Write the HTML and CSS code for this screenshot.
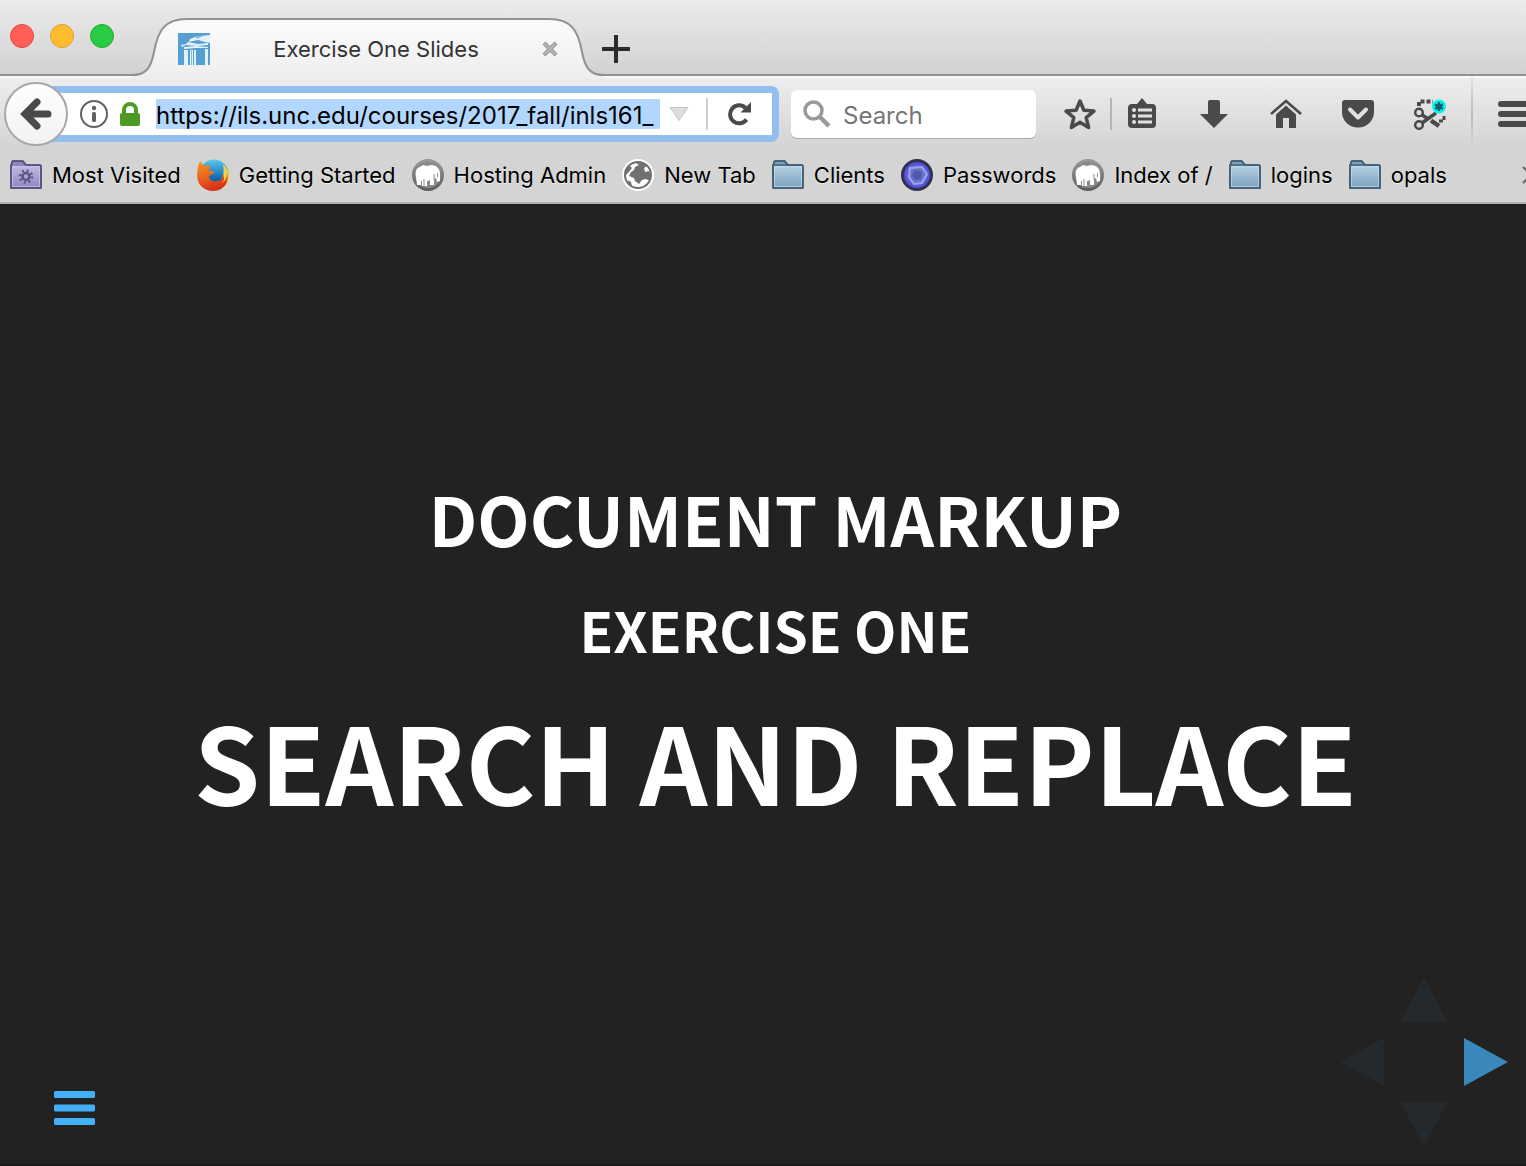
FILE: index.html
```html
<!DOCTYPE html>
<html lang="en">
<head>
<meta charset="utf-8">
<title>Exercise One Slides</title>
<link rel="stylesheet" href="styles.css">
</head>
<body>
<svg class="defs" aria-hidden="true">
  <defs>
    <linearGradient id="folderFill" x1="0" y1="0" x2="0" y2="1"><stop offset="0" stop-color="#b4cfe0"/><stop offset="1" stop-color="#7da3c0"/></linearGradient>
    <linearGradient id="smartFill" x1="0" y1="0" x2="0" y2="1"><stop offset="0" stop-color="#bfb8e2"/><stop offset="1" stop-color="#9388c4"/></linearGradient>
    <linearGradient id="tabFill" x1="0" y1="0" x2="0" y2="1"><stop offset="0" stop-color="#fbfbfb"/><stop offset="1" stop-color="#eeeeee"/></linearGradient>
    <linearGradient id="foxFill" x1="0" y1="0" x2="0.3" y2="1"><stop offset="0" stop-color="#f59a22"/><stop offset="0.5" stop-color="#ee6a1c"/><stop offset="1" stop-color="#d5321c"/></linearGradient>
    <linearGradient id="skyFill" x1="0" y1="0" x2="0" y2="1"><stop offset="0" stop-color="#5cc8ee"/><stop offset="0.6" stop-color="#1272b8"/><stop offset="1" stop-color="#143c78"/></linearGradient>
    <radialGradient id="gemFill"><stop offset="0" stop-color="#5c66c0"/><stop offset="0.5" stop-color="#6d70d8"/><stop offset="1" stop-color="#4440dc"/></radialGradient>
    <linearGradient id="ringFill" x1="0" y1="0" x2="0" y2="1"><stop offset="0" stop-color="#989898"/><stop offset="1" stop-color="#5e5e5e"/></linearGradient>
    <symbol id="folder" viewBox="0 0 32 32">
      <path d="M1 29V6l1-1V3l1-1h9.500l3.500 4h14l1 1v22z" fill="#7fa2bb" stroke="#46637b" stroke-width="2" stroke-linejoin="round"/>
      <path d="M2 7h28v21H2z" fill="url(#folderFill)"/>
      <path d="M2.500 27.500V8h27v19.500z" fill="none" stroke="#c3dbe9" stroke-opacity=".7"/>
      <path d="M1 6h14" stroke="#46637b" stroke-width="1.500"/>
    </symbol>
    <symbol id="elephant" viewBox="0 0 32 32">
      <circle cx="16" cy="16" r="14.500" fill="#8a8a8a" stroke="url(#ringFill)" stroke-width="3"/>
      <path d="M4 18c-1-5 0-9 4-10l3-2 4 1 4-1c6 0 9 4 9 9v7l-3 1-1-4-2 1v6h-5v-4h-2v5h-5v-5h-1v4H5z" fill="#fff"/>
      <path d="M12 20v7M17.500 21v5M22 15v6M25.500 14v4" stroke="#8a8a8a" fill="none"/>
    </symbol>
  </defs>
</svg>
<div class="window">
  <header class="chrome">
    <div class="tabstrip">
      <div class="lights">
        <button class="light close" aria-label="Close window"></button>
        <button class="light minimize" aria-label="Minimize window"></button>
        <button class="light expand" aria-label="Zoom window"></button>
      </div>
      <div class="tab">
        <svg class="tab-edge" viewBox="0 0 60 60"><path d="M0 58c14 0 19-7 22-23C26 14 32 2 55 2h5v58H0z" fill="url(#tabFill)"/><path d="M0 57c14 0 19-7 22-23C26 13 32 1 55 1h5" fill="none" stroke="#929292" stroke-width="2"/></svg>
        <div class="tab-body">
          <svg class="favicon" viewBox="0 0 32 32"><path fill="#569fd3" d="M0 0h32v32H0z"/><path d="M12 6 17 4l6-1 9-1v8l-5-1-7-2-9 2zM3 12l5-1 2-2 10 2 10-1v2l-11 1-11-1-4 2zM6 14l12-1 12 1v1l-12 0-12 1zM6 17h4v15H6zM12 17h3v15h-3zM16 17h2v15h-2zM27 16h3v16h-3z" fill="#e3f1f8"/><path d="M18 4l9-2-8 4M13 15h1v17h-1z" fill="#86bce0"/></svg>
          <span class="tab-title">Exercise One Slides</span>
          <button class="plain tab-close" aria-label="Close tab"><svg viewBox="0 0 16 16"><path d="M2 2l12 12M14 2L2 14" stroke="#8a8a8a" stroke-width="4"/><path d="M2.500 2.500l11 11M13.500 2.500l-11 11" stroke="#b4b4b4" stroke-width="2.500"/></svg></button>
        </div>
        <svg class="tab-edge" viewBox="0 0 60 60"><path d="M60 58C46 58 41 51 38 35C34 14 28 2 5 2H0v58h60z" fill="url(#tabFill)"/><path d="M60 57C46 57 41 50 38 34C34 13 28 1 5 1H0" fill="none" stroke="#929292" stroke-width="2"/></svg>
      </div>
      <button class="plain new-tab" aria-label="New tab"><svg viewBox="0 0 28 28"><path d="M14 0v28M0 14h28" stroke="#2b2b2b" stroke-width="4"/></svg></button>
    </div>

    <div class="toolbar">
      <button class="back" aria-label="Back"><svg viewBox="0 0 32 32"><path d="M17 4 5 16l12 12M6 16h22" fill="none" stroke="#4a4a4a" stroke-width="7" stroke-linecap="round" stroke-linejoin="miter"/></svg></button>
      <div class="urlbar">
        <svg class="info" viewBox="0 0 28 28"><circle cx="14" cy="14" r="13" fill="none" stroke="#626262" stroke-width="2"/><circle cx="14" cy="8" r="2.200" fill="#626262"/><rect x="12" y="12" width="4" height="10" rx="1.500" fill="#626262"/></svg>
        <svg class="lock" viewBox="0 0 20 24"><path d="M4 12V8a6 6 0 0 1 12 0v4" fill="none" stroke="#4d9a26" stroke-width="4"/><rect y="11" width="20" height="13" rx="2" fill="#4d9a26"/></svg>
        <input class="url" aria-label="Address" value="https://ils.unc.edu/courses/2017_fall/inls161_">
        <button class="plain drop" aria-label="Show history"><svg viewBox="0 0 20 14"><path d="M1 .500h18L10 13.500z" fill="#dedede" stroke="#c6c6c6"/></svg></button>
        <span class="divider"></span>
        <button class="plain reload" aria-label="Reload"><svg viewBox="0 0 24 24"><path d="M18.500 17.500a9 9 0 1 1-1-11.500" fill="none" stroke="#4a4a4a" stroke-width="4"/><path d="M23 0v10.500H12.500z" fill="#4a4a4a"/></svg></button>
      </div>
      <div class="searchbar">
        <svg viewBox="0 0 28 28"><circle cx="10.500" cy="10.500" r="8.500" fill="none" stroke="#999" stroke-width="3.500"/><path d="M16 16l10 10" stroke="#999" stroke-width="4.500"/></svg>
        <input class="search" type="search" aria-label="Search" placeholder="Search">
      </div>
      <button class="plain tool star" aria-label="Bookmark this page"><svg viewBox="0 0 32 32"><path d="M16 3l3.900 9.300 10 .8-7.700 6.500 2.400 9.900L16 24.200l-8.600 5.300 2.400-9.900-7.700-6.500 10-.8z" fill="none" stroke="#4a4a4a" stroke-width="3.500" stroke-linejoin="round"/></svg></button>
      <span class="divider dark"></span>
      <div class="tools">
        <button class="plain tool" aria-label="Show bookmarks"><svg viewBox="0 0 32 32"><path d="M11 6l5-6 5 6h5a4 4 0 0 1 4 4v16a4 4 0 0 1-4 4H6a4 4 0 0 1-4-4V10a4 4 0 0 1 4-4z" fill="#4a4a4a"/><path d="M12 12h14M12 18h14M12 24h14" stroke="#e2e2e2" stroke-width="3"/><g fill="#e2e2e2"><circle cx="8" cy="12" r="2"/><circle cx="8" cy="18" r="2"/><circle cx="8" cy="24" r="2"/></g></svg></button>
        <button class="plain tool" aria-label="Downloads"><svg viewBox="0 0 32 32"><path d="M12 2h8q2 0 2 2v12h8L16 30 2 16h8V4q0-2 2-2z" fill="#4a4a4a"/></svg></button>
        <button class="plain tool" aria-label="Home"><svg viewBox="0 0 32 32"><path d="M1 16 16 3l15 13" fill="none" stroke="#4a4a4a" stroke-width="2.500"/><path d="M16 7.500 26 16.500V30h-7V20h-6v10H6V16.500z" fill="#4a4a4a"/></svg></button>
        <button class="plain tool" aria-label="Save to Pocket"><svg viewBox="0 0 32 32"><path d="M3 2h26q3 0 3 3v9a16 15.500 0 0 1-32 0V5q0-3 3-3z" fill="#4a4a4a"/><path d="M8 11.500l8 8 8-8" fill="none" stroke="#e2e2e2" stroke-width="4" stroke-linecap="round" stroke-linejoin="round"/></svg></button>
        <button class="plain tool" aria-label="Capture page"><svg viewBox="0 0 32 32"><g fill="none" stroke="#4a4a4a"><circle cx="5" cy="14.500" r="3.800" stroke-width="2.500"/><circle cx="5" cy="27" r="3.800" stroke-width="2.500"/><path d="M8 25 22 15M8 17l5 3" stroke-width="3.500"/><path d="M17 22.500l8 5.500" stroke-width="4.500"/><path d="M5 8V3.500h14" stroke-width="4" stroke-dasharray="4 2"/><path d="M30 18v5h-5" stroke-width="3" stroke-dasharray="4 2"/></g><circle cx="25" cy="8.500" r="7" fill="#00f6f6"/><path d="M25 4v9M21 6.300l8 4.500M21 10.800l8-4.500" stroke="#175c68" stroke-width="2.500"/></svg></button>
      </div>
      <span class="menu-divider"></span>
      <button class="plain menu" aria-label="Open menu"><svg viewBox="0 0 36 28"><path d="M3 4h30M3 14h30M3 24h30" stroke="#4a4a4a" stroke-width="6" stroke-linecap="round"/></svg></button>
    </div>

    <nav class="bookmarks" aria-label="Bookmarks">
      <a href="#"><svg viewBox="0 0 32 32"><path d="M1 29V6l1-1V3l1-1h9.500l3.500 4h14l1 1v22z" fill="#9187bd" stroke="#5d5584" stroke-width="2" stroke-linejoin="round"/><path d="M2 7h28v21H2z" fill="url(#smartFill)"/><path d="M2.500 27.500V8h27v19.500z" fill="none" stroke="#cdc8ea" stroke-opacity=".7"/><circle cx="16" cy="17.500" r="3.500" fill="none" stroke="#5d5584" stroke-width="2.500"/><circle cx="16" cy="17.500" r="6" fill="none" stroke="#5d5584" stroke-width="2.500" stroke-dasharray="2 2.700"/></svg>Most Visited</a>
      <a href="#"><svg viewBox="0 0 32 32"><circle cx="17" cy="15" r="14.500" fill="url(#skyFill)"/><path d="M26 5c8 7 8 19 0 24l-8-3c7-3 10-10 8-21z" fill="#f6d045"/><path d="M3 2l4 5c2-1 5-1 7 0l-3 4 3 1c3 0 4 1 3 2l-5 3c0 4 4 6 8 5 4 0 6-3 6-7 2 4 1 7-1 9 4-2 5-6 5-10 3 10-4 18-14 18C6 32-2 24 .5 12c0-3 1-7 2.500-10z" fill="url(#foxFill)"/></svg>Getting Started</a>
      <a href="#"><svg><use href="#elephant"/></svg>Hosting Admin</a>
      <a href="#"><svg viewBox="0 0 32 32"><circle cx="16" cy="16" r="16" fill="#fff"/><circle cx="16" cy="16" r="13" fill="#fff" stroke="#707070" stroke-width="2"/><path d="M14 4l8 0 3 3-3 2 1 4 4-1 2 4-1 6-4-2-4 1-3 4-4-3-1-3-5-2 2-4 3-2 1-3 4-2z" fill="#707070"/><path d="M4 10l4-3 2 2-4 5-2 2zM6 21l3 2 1 4c-3-1-4-4-4-6z" fill="#707070"/></svg>New Tab</a>
      <a href="#"><svg><use href="#folder"/></svg>Clients</a>
      <a href="#"><svg viewBox="0 0 32 32"><circle cx="16" cy="16" r="14.500" fill="url(#gemFill)" stroke="#30304c" stroke-width="3"/><path d="M9 9l12-1 5 7-5 9-8 1-5-7z" fill="#6a71c6" stroke="#9fa3ef" stroke-width="2"/><path d="M14 11l7 2-1 7-6 1-3-5z" fill="#5059b0"/></svg>Passwords</a>
      <a href="#"><svg><use href="#elephant"/></svg>Index of /</a>
      <a href="#"><svg><use href="#folder"/></svg>logins</a>
      <a href="#"><svg><use href="#folder"/></svg>opals</a>
      <button class="plain more" aria-label="More bookmarks"><svg viewBox="0 0 12 18"><path d="M1 1l8 8-8 8" fill="none" stroke="#666" stroke-width="2"/></svg></button>
    </nav>
  </header>

  <main class="deck">
    <section class="slide">
      <h2>DOCUMENT MARKUP</h2>
      <h3>EXERCISE ONE</h3>
      <h1>SEARCH AND REPLACE</h1>
    </section>
    <button class="plain deck-menu" aria-label="Slide menu"><svg viewBox="0 0 42 36"><g fill="#42affa"><rect y="1" width="41" height="7" rx="1.500"/><rect y="14.500" width="41" height="7" rx="1.500"/><rect y="28" width="41" height="7" rx="1.500"/></g></svg></button>
    <div class="controls">
      <button class="plain up" aria-label="Slide up"><svg viewBox="0 0 48 44"><path d="M24 0l24 44H0z"/></svg></button>
      <button class="plain left" aria-label="Previous slide"><svg viewBox="0 0 44 48"><path d="M44 0v48L0 24z"/></svg></button>
      <button class="plain right" aria-label="Next slide"><svg viewBox="0 0 44 48"><path d="M0 0v48l44-24z"/></svg></button>
      <button class="plain down" aria-label="Slide down"><svg viewBox="0 0 48 44"><path d="M0 0h48L24 44z"/></svg></button>
    </div>
  </main>
</div>
</body>
</html>
```
FILE: styles.css
```css
* { box-sizing: border-box; }

body {
  margin: 0;
  font-family: Inter, "Liberation Sans", sans-serif;
  font-size: 22px;
  color: #000;
}

svg { display: block; flex-shrink: 0; }
.defs { position: absolute; width: 0; height: 0; }

.plain {
  padding: 0;
  border: 0;
  background: none;
  display: flex;
  align-items: center;
  justify-content: center;
  flex-shrink: 0;
}

.window {
  min-height: 100vh;
  display: flex;
  flex-direction: column;
  overflow: hidden;
}

.chrome {
  background: linear-gradient(#eeeeee 76px, #d4d4d4 148px);
  border-bottom: 2px solid #b0b0b0;
}

/* tab strip */
.tabstrip {
  height: 76px;
  display: flex;
  align-items: flex-end;
  background: linear-gradient(#ebebeb, #d2d2d2);
  border-bottom: 2px solid #929292;
}
.lights { display: flex; gap: 16px; padding-left: 10px; align-self: flex-start; margin-top: 24px; width: 132px; flex-shrink: 0; }
.light { width: 24px; height: 24px; padding: 0; border-radius: 50%; border: 1px solid; }
.close { background: #ff5f57; border-color: #e2453e; }
.minimize { background: #febc2e; border-color: #e0a028; }
.expand { background: #28cb41; border-color: #1cad2f; }

.tab { display: flex; height: 60px; margin-bottom: -4px; margin-right: -2px; }
.tab-edge { width: 60px; height: 60px; }
.tab-body {
  position: relative;
  width: 364px;
  display: flex;
  align-items: center;
  margin: 0 -6px;
  background: linear-gradient(#fbfbfb, #eeeeee);
  border-top: 2px solid #929292;
}
.favicon { width: 32px; height: 32px; margin-left: -8px; }
.tab-title { flex: 1; text-align: center; color: #333; }
.tab-close { margin-right: -8px; }
.tab-close svg { width: 16px; height: 16px; }
.new-tab { width: 28px; height: 28px; margin-bottom: 11px; }
.new-tab svg { width: 28px; height: 28px; }

/* navigation toolbar */
.toolbar { height: 74px; display: flex; align-items: center; border-top: 2px solid #f8f8f8; }
.back {
  width: 64px;
  height: 64px;
  margin: 0 -18px 0 4px;
  padding: 0;
  border: 2px solid #a8a8a8;
  border-radius: 50%;
  background: linear-gradient(#fefefe, #f2f2f2);
  display: flex;
  align-items: center;
  justify-content: center;
  flex-shrink: 0;
  z-index: 1;
}
.back svg { width: 32px; height: 32px; }
.urlbar {
  flex: 1;
  min-width: 0;
  height: 56px;
  display: flex;
  align-items: center;
  padding-left: 30px;
  padding-right: 20px;
  border: solid #92bef0;
  border-width: 7px 7px 7px 0;
  border-radius: 0 8px 8px 0;
  background: #fff;
}
.info { width: 28px; height: 28px; }
.lock { width: 20px; height: 24px; margin: 0 16px 0 12px; }
.url, .search { min-width: 0; border: 0; padding: 2px 0 0; font: inherit; font-size: 24px; outline: 0; }
.url { flex: 1; height: 30px; background: #b2d7fe; }
.drop { width: 38px; }
.drop svg { width: 20px; height: 14px; }
.divider { width: 2px; height: 32px; margin: 0 20px 0 8px; background: #cfcfcf; flex-shrink: 0; }
.reload svg { width: 24px; height: 24px; }
.searchbar {
  width: 245px;
  height: 48px;
  flex-shrink: 0;
  display: flex;
  align-items: center;
  gap: 12px;
  margin: 0 28px 0 12px;
  padding-left: 12px;
  border-radius: 6px;
  background: #fff;
  box-shadow: 0 1px 0 #ababab;
}
.searchbar svg { width: 28px; height: 28px; }
.search { flex: 1; background: transparent; }
.search::placeholder { color: #757575; opacity: 1; }
.tool svg { width: 32px; height: 32px; }
.divider.dark { margin: 0 14px; background: #b5b5b5; }
.tools { display: flex; gap: 40px; }
.menu-divider { width: 2px; height: 72px; margin: 0 25px; background: linear-gradient(#dedede, #bbbbbb, #d2d2d2); }
.menu { width: 28px; justify-content: flex-start; }
.menu svg { width: 36px; height: 28px; }

/* bookmarks toolbar */
.bookmarks { height: 52px; display: flex; align-items: center; gap: 16px; padding: 0 0 2px 10px; }
.bookmarks a {
  display: flex;
  align-items: center;
  gap: 10px;
  color: #000;
  text-decoration: none;
  white-space: nowrap;
  text-shadow: 0 1px 0 #eee;
}
.bookmarks svg { width: 32px; height: 32px; }
.more { width: 4px; margin-left: auto; justify-content: flex-start; }
.bookmarks .more svg { width: 12px; height: 18px; }

/* slide deck */
.deck {
  flex: 1;
  position: relative;
  display: flex;
  align-items: center;
  justify-content: center;
  padding: 0 0 66px 25px;
  background: #222;
  border-bottom: 2px solid #1c1a1d;
}
.slide { text-align: center; color: #fff; font-family: "Noto Sans CJK SC", sans-serif; white-space: nowrap; }
.slide h1, .slide h2, .slide h3 { margin: 0; font-weight: 600; }
.slide h2 { font-size: 68px; line-height: 84px; margin-bottom: 36px; }
.slide h3 { font-size: 55px; line-height: 66px; margin-bottom: 32px; }
.slide h1 { font-size: 106px; line-height: 132px; }

.deck-menu { position: absolute; left: 54px; bottom: 38px; }
.deck-menu svg { width: 42px; height: 36px; }
.controls {
  position: absolute;
  right: 18px;
  bottom: 18px;
  display: grid;
  grid-template: 44px 80px 44px / 44px 80px 44px;
  place-items: center;
}
.controls svg { fill: #24292d; }
.up, .down { grid-column: 2; }
.up { grid-row: 1; }
.down { grid-row: 3; }
.left { grid-area: 2 / 1; }
.right { grid-area: 2 / 3; }
.up svg, .down svg { width: 48px; height: 44px; }
.left svg, .right svg { width: 44px; height: 48px; }
.controls .right svg { fill: #3a87bb; }
```
